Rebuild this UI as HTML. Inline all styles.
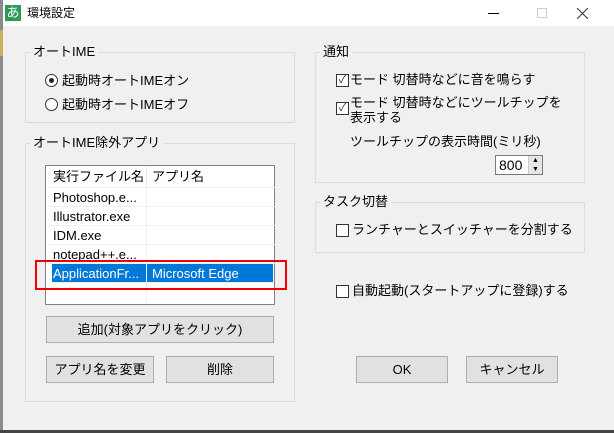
<!DOCTYPE html>
<html><head><meta charset="utf-8"><style>
*{margin:0;padding:0;box-sizing:border-box}
body{width:614px;height:433px;background:#f0f0f0;position:relative;overflow:hidden;font-family:"Liberation Sans","Noto Sans CJK JP",sans-serif;font-size:13px;color:#000}
.a{position:absolute;white-space:nowrap;line-height:16px}
.grp{position:absolute;border:1px solid #dcdcdc}
.lbl{position:absolute;background:#f0f0f0;padding:0 3px;line-height:16px}
.btn{position:absolute;background:#e1e1e1;border:1px solid #adadad;text-align:center;line-height:25px}
.cb{position:absolute;width:13px;height:13px;border:1px solid #333;background:#fff}
.rd{position:absolute;width:13px;height:13px;border:1px solid #333;border-radius:50%;background:#fff}
.row{position:absolute;left:1px;width:228px;height:19px;line-height:19px;border-bottom:1px solid #f0f0f0}
.row span{position:absolute;left:6px}
</style></head><body>
<div style="position:absolute;left:0;top:0;width:3px;height:433px;background:#8a8a8a"></div>
<div style="position:absolute;left:0;top:30px;width:3px;height:26px;background:#c9b25a"></div>
<div style="position:absolute;left:3px;top:0;width:611px;height:26px;background:#fff"></div>
<div style="position:absolute;left:5px;top:5px;width:16px;height:16px;background:#2e9a5a;color:#fff;font-size:13px;line-height:16px;text-align:center">あ</div>
<div class="a" style="left:27px;top:5px;font-size:12px">環境設定</div>
<div style="position:absolute;left:488px;top:13px;width:11px;height:1px;background:#000"></div>
<div style="position:absolute;left:537px;top:8px;width:10px;height:10px;border:1px solid #ccc"></div>
<svg style="position:absolute;left:577px;top:8px" width="11" height="11"><path d="M0 0L11 11M11 0L0 11" stroke="#333" stroke-width="1"/></svg>
<div style="position:absolute;left:0;top:430px;width:614px;height:3px;background:#444"></div>

<div class="grp" style="left:25px;top:52px;width:270px;height:71px"></div>
<div class="lbl" style="left:30px;top:44px">オートIME</div>
<div class="rd" style="left:45px;top:74px"><div style="position:absolute;left:3px;top:3px;width:5px;height:5px;border-radius:50%;background:#222"></div></div>
<div class="a" style="left:62px;top:73px">起動時オートIMEオン</div>
<div class="rd" style="left:45px;top:98px"></div>
<div class="a" style="left:62px;top:97px">起動時オートIMEオフ</div>

<div class="grp" style="left:25px;top:143px;width:270px;height:259px"></div>
<div class="lbl" style="left:30px;top:135px">オートIME除外アプリ</div>
<div style="position:absolute;left:45px;top:165px;width:230px;height:140px;background:#fff;border:1px solid #828282">
 <div style="position:absolute;left:100px;top:0;width:1px;height:138px;background:#f0f0f0"></div>
 <div class="row" style="top:0;height:22px;line-height:22px"><span>実行ファイル名</span><span style="left:105px">アプリ名</span></div>
 <div style="position:absolute;left:100px;top:0;width:1px;height:22px;background:#e5e5e5"></div>
 <div class="row" style="top:22px"><span>Photoshop.e...</span></div>
 <div class="row" style="top:41px"><span>Illustrator.exe</span></div>
 <div class="row" style="top:60px"><span>IDM.exe</span></div>
 <div class="row" style="top:79px"><span>notepad++.e...</span></div>
 <div class="row" style="top:98px;background:#0078d7;color:#fff;width:221px;left:6px"><span style="left:1px">ApplicationFr...</span><span style="left:100px">Microsoft Edge</span></div>
 <div style="position:absolute;left:100px;top:98px;width:1px;height:19px;background:#fff"></div>
</div>
<div style="position:absolute;left:35px;top:260px;width:252px;height:30px;border:2px solid #e00"></div>

<div class="btn" style="left:46px;top:316px;width:228px;height:27px">追加(対象アプリをクリック)</div>
<div class="btn" style="left:46px;top:356px;width:108px;height:27px">アプリ名を変更</div>
<div class="btn" style="left:166px;top:356px;width:108px;height:27px">削除</div>

<div class="grp" style="left:315px;top:52px;width:270px;height:131px"></div>
<div class="lbl" style="left:320px;top:44px">通知</div>
<div class="cb" style="left:336px;top:74px;color:#333;font-size:11px;line-height:11px;text-align:center">✓</div>
<div class="a" style="left:350px;top:72px">モード 切替時などに音を鳴らす</div>
<div class="cb" style="left:336px;top:102px;color:#333;font-size:11px;line-height:11px;text-align:center">✓</div>
<div class="a" style="left:350px;top:95px;line-height:15px">モード 切替時などにツールチップを<br>表示する</div>
<div class="a" style="left:350px;top:134px">ツールチップの表示時間(ミリ秒)</div>
<div style="position:absolute;left:495px;top:155px;width:48px;height:20px;background:#fff;border:1px solid #7a7a7a">
 <div class="a" style="left:3px;top:1px;font-size:14px">800</div>
 <div style="position:absolute;right:0;top:0;width:14px;height:18px;background:#e6e6e6;border-left:1px solid #ccc;font-size:7px;line-height:9px;text-align:center">▲<br>▼</div>
</div>

<div class="grp" style="left:315px;top:202px;width:270px;height:51px"></div>
<div class="lbl" style="left:320px;top:194px">タスク切替</div>
<div class="cb" style="left:336px;top:224px"></div>
<div class="a" style="left:352px;top:222px">ランチャーとスイッチャーを分割する</div>

<div class="cb" style="left:336px;top:285px"></div>
<div class="a" style="left:352px;top:283px">自動起動(スタートアップに登録)する</div>

<div class="btn" style="left:356px;top:356px;width:92px;height:27px">OK</div>
<div class="btn" style="left:466px;top:356px;width:92px;height:27px">キャンセル</div>
</body></html>
